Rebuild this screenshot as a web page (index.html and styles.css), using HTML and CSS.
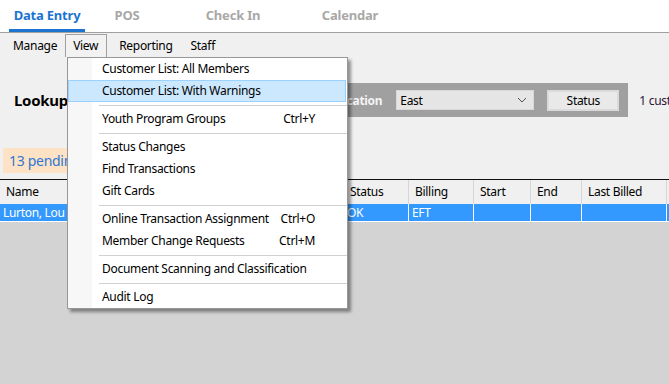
FILE: index.html
```html
<!DOCTYPE html>
<html lang="en">
<head>
    <meta charset="UTF-8">
    <meta name="viewport" content="width=device-width, initial-scale=1.0">
    <title>Data Entry</title>
    <link rel="stylesheet" href="styles.css">
</head>
<body>
    <!-- Pestañas principales -->
    <div class="tabs">
        <div class="tab tab-data active">Data Entry</div>
        <div class="tab tab-pos">POS</div>
        <div class="tab tab-checkin">Check In</div>
        <div class="tab tab-calendar">Calendar</div>
    </div>

    <!-- Barra de menú -->
    <div class="menubar">
        <span class="menu-item">Manage</span>
        <span class="menu-item open">View</span>
        <span class="menu-item">Reporting</span>
        <span class="menu-item staff">Staff</span>
    </div>

    <div class="content">
        <div class="lookup-row">
            <h2 class="lookup-title">Lookup</h2>
            <div class="filter-panel">
                <span class="filter-label">Location</span>
                <div class="select">
                    <span>East</span>
                    <svg width="10" height="6" viewBox="0 0 10 6"><path d="M1 1 L5 5 L9 1" fill="none" stroke="#555" stroke-width="1"/></svg>
                </div>
                <button class="status-btn">Status</button>
            </div>
            <span class="count">1 customer found</span>
        </div>

        <div class="pending">13 pending change requests</div>

        <!-- Tabla de clientes -->
        <div class="grid">
            <div class="grid-row grid-head">
                <div class="cell">Name</div>
                <div class="cell">Member #</div>
                <div class="cell">Type</div>
                <div class="cell">Status</div>
                <div class="cell">Billing</div>
                <div class="cell">Start</div>
                <div class="cell">End</div>
                <div class="cell">Last Billed</div>
                <div class="cell"></div>
            </div>
            <div class="grid-row selected">
                <div class="cell">Lurton, Lou</div>
                <div class="cell">1042</div>
                <div class="cell">Single</div>
                <div class="cell">OK</div>
                <div class="cell">EFT</div>
                <div class="cell"></div>
                <div class="cell"></div>
                <div class="cell"></div>
                <div class="cell"></div>
            </div>
        </div>
    </div>

    <!-- Menú desplegable "View" -->
    <div class="dropdown">
        <div class="dd-item"><span>Customer List: All Members</span></div>
        <div class="dd-item hover"><span>Customer List: With Warnings</span></div>
        <div class="dd-sep"></div>
        <div class="dd-item"><span>Youth Program Groups</span><span class="shortcut">Ctrl+Y</span></div>
        <div class="dd-sep"></div>
        <div class="dd-item"><span>Status Changes</span></div>
        <div class="dd-item"><span>Find Transactions</span></div>
        <div class="dd-item"><span>Gift Cards</span></div>
        <div class="dd-sep"></div>
        <div class="dd-item"><span>Online Transaction Assignment</span><span class="shortcut">Ctrl+O</span></div>
        <div class="dd-item"><span>Member Change Requests</span><span class="shortcut">Ctrl+M</span></div>
        <div class="dd-sep"></div>
        <div class="dd-item"><span>Document Scanning and Classification</span></div>
        <div class="dd-sep"></div>
        <div class="dd-item"><span>Audit Log</span></div>
    </div>
</body>
</html>
```

FILE: styles.css
```css
body {
    margin: 0;
    padding: 0;
    height: 100vh;
    display: flex;
    flex-direction: column;
    background-color: #f0f0f0;
    font-family: "Noto Sans", "Open Sans", sans-serif;
    font-size: 12px;
    letter-spacing: -0.3px;
    color: #000;
    overflow: hidden;
}

/* Pestañas */
.tabs {
    display: flex;
    height: 32px;
    background-color: #fff;
    border-bottom: 1px solid #a0a0a0;
    padding-left: 9px;
}

.tab {
    font-size: 13px;
    font-weight: 700;
    letter-spacing: -0.2px;
    color: #a8a8a8;
    line-height: 30px;
    text-align: center;
    flex-shrink: 0;
}

.tab-data { width: 76px; }
.tab-pos { width: 84px; }
.tab-checkin { width: 128px; }
.tab-calendar { width: 106px; }

.tab.active {
    color: #1b74d0;
    border-bottom: 3px solid #1b74d0;
    height: 29px;
}

/* Menú */
.menubar {
    display: flex;
    height: 24px;
    padding: 2px 0 0 5px;
    box-sizing: border-box;
}

.menu-item {
    padding: 0 8px;
    line-height: 22px;
}

.menu-item.open {
    position: relative;
    z-index: 3;
    border: 1px solid #a0a0a0;
    border-bottom: none;
    padding: 0 8px 1px 7px;
    line-height: 21px;
    margin: -1px 4px 0 0;
    background-color: #f2f2f2;
}

.menu-item.staff {
    margin-left: 2px;
}

.content {
    flex: 1;
    display: flex;
    flex-direction: column;
    padding-top: 26px;
}

/* Fila de búsqueda */
.lookup-row {
    display: flex;
    align-items: center;
}

.lookup-row > * {
    flex-shrink: 0;
}

.lookup-title {
    margin: 0;
    padding-left: 14px;
    width: 309px;
    font-size: 15px;
    font-weight: 700;
}

.filter-panel {
    display: flex;
    align-items: center;
    background-color: #a0a0a0;
    height: 34px;
    padding: 0 9px 0 10px;
    box-sizing: border-box;
}

.filter-label {
    color: #f4f4f4;
    font-weight: 700;
    margin-right: 14px;
}

.select {
    display: flex;
    align-items: center;
    justify-content: space-between;
    width: 138px;
    height: 20px;
    box-sizing: border-box;
    padding: 0 6px 0 3px;
    background-color: #e5e5e5;
    border: 1px solid #d8d8d8;
}

.status-btn {
    margin-left: 13px;
    width: 72px;
    height: 21px;
    background-color: #e9e9e9;
    border: 2px solid #dadada;
    font-family: inherit;
    font-size: 12px;
    letter-spacing: -0.3px;
    padding: 0;
}

.count {
    margin-left: 11px;
    white-space: nowrap;
    color: #2a1638;
}

.pending {
    margin: 31px 0 0 3px;
    width: 250px;
    height: 25px;
    line-height: 25px;
    padding-left: 6px;
    box-sizing: border-box;
    background-color: #fde2c6;
    color: #2f78d2;
    font-size: 14px;
    white-space: nowrap;
}

/* Tabla */
.grid {
    flex: 1;
    margin-top: 6px;
    border-top: 1px solid #111;
    background-color: #d3d3d3;
    overflow: hidden;
}

.grid-row {
    display: grid;
    grid-template-columns: 130px 110px 104px 65px 65px 57px 51px 85px 100px;
}

.grid-head {
    height: 24px;
    background-color: #f0f0f0;
}

.grid-head .cell {
    border-right: 1px solid #d6d6d6;
    line-height: 24px;
    padding-left: 6px;
}

.selected {
    height: 18px;
    background-color: #3399ff;
    color: #fff;
    border-bottom: 1px solid #fff;
    box-sizing: border-box;
}

.selected .cell {
    border-right: 1px solid #fff;
    line-height: 17px;
    padding-left: 3px;
}

.cell {
    box-sizing: border-box;
    white-space: nowrap;
    overflow: hidden;
}

/* Menú desplegable */
.dropdown {
    position: absolute;
    left: 67px;
    top: 57px;
    width: 281px;
    box-sizing: border-box;
    border: 1px solid #979797;
    background: linear-gradient(to right, #f7f7f7 0, #f7f7f7 24px, #fff 24px);
    box-shadow: 3px 3px 3px rgba(0, 0, 0, 0.4);
    z-index: 2;
}

.dd-item {
    display: flex;
    height: 22px;
    box-sizing: border-box;
    line-height: 20px;
    padding: 0 30px 0 33px;
    border: 1px solid transparent;
    margin-right: 1px;
    white-space: nowrap;
}

.dd-item.hover {
    background-color: #cce8ff;
    border-color: #99d1ff;
}

.shortcut {
    margin-left: auto;
}

.dd-sep {
    height: 6px;
    margin-left: 31px;
    background: linear-gradient(#fff 0, #fff 3px, #d0d0d0 3px, #d0d0d0 4px, #fff 4px);
}
```
